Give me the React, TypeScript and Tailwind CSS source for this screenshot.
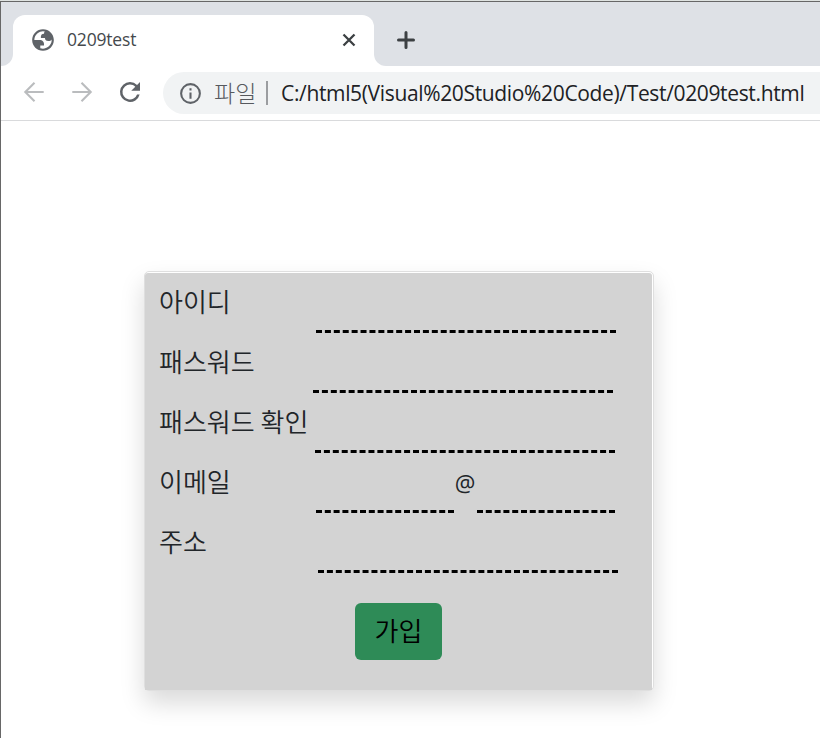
import React from "react";

const latin = "font-['Open_Sans','Noto_Sans_CJK_KR',sans-serif]";
const korean = "font-['Noto_Sans_CJK_KR','Open_Sans',sans-serif]";

function Globe() {
  return (
    <svg className="relative -top-px h-[26px] w-[26px] shrink-0" viewBox="0 0 24 24" fill="#5f6368">
      <path
        fillRule="evenodd"
        d="M12 2C6.48 2 2 6.48 2 12s4.48 10 10 10 10-4.48 10-10S17.52 2 12 2zM4 12h4.4c3.407.022 4.922 1.73 4.543 5.127H9.488v2.47a8.004 8.004 0 0 0 10.498-8.083C19.327 12.504 18.332 13 17 13c-2.137 0-3.206-.916-3.206-2.75h-3.748c-.274-2.728.683-4.092 2.87-4.092 0-.975.327-1.597.811-1.97A8.004 8.004 0 0 0 4 12z"
      />
    </svg>
  );
}

function TabBar() {
  return (
    <div className="flex h-[65px] items-start border-t border-[#676767] bg-[#dee1e6]">
      <div className="flex h-[64px] w-3 items-end bg-white">
        <div className="h-full w-full rounded-br-[12px] bg-[#dee1e6]" />
      </div>
      <div className="mt-[13px] flex h-[51px] w-[361px] items-center rounded-t-[12px] bg-white pl-[17px]">
        <Globe />
        <span className={`${latin} ml-[11px] flex-1 pb-[3px] text-[17.5px] leading-6 tracking-[-0.18px] text-[#45494d]`}>
          0209test
        </span>
        <svg className="mb-[2px] mr-[18px] h-[14px] w-[14px]" viewBox="0 0 14 14" fill="none" stroke="#3c4043" strokeWidth="2.3">
          <path d="M1.5 1.5l11 11M12.5 1.5l-11 11" />
        </svg>
      </div>
      <div className="h-[64px] flex-1 bg-white">
        <div className="h-full w-full rounded-bl-[12px] bg-[#dee1e6] pl-[23px] pt-[29px]">
          <svg className="h-[18px] w-[18px]" viewBox="0 0 18 18" fill="none" stroke="#3c4043" strokeWidth="3" strokeLinecap="round">
            <path d="M9 1.5v15M1.5 9h15" />
          </svg>
        </div>
      </div>
    </div>
  );
}

function AddressBar() {
  return (
    <div className="flex h-[55px] items-center border-b border-[#d9dadc] bg-white pl-[22px]">
      <svg className="mb-[2px] h-[22px] w-[22px] shrink-0" viewBox="0 0 22 22" fill="none" stroke="#babcbe" strokeWidth="2.1">
        <path d="M20.7 11H2.3M11.5 1.8L2.3 11l9.2 9.2" />
      </svg>
      <svg className="mb-[2px] ml-[26px] h-[22px] w-[22px] shrink-0" viewBox="0 0 22 22" fill="none" stroke="#babcbe" strokeWidth="2.1">
        <path d="M1.3 11h18.4M10.5 1.8l9.2 9.2-9.2 9.2" />
      </svg>
      <svg className="mb-[2px] ml-[22px] h-[30px] w-[30px] shrink-0" viewBox="0 0 24 24" fill="#5f6368">
        <path d="M17.65 6.35A7.958 7.958 0 0 0 12 4a8 8 0 1 0 7.73 10h-2.08A6 6 0 1 1 12 6c1.66 0 3.14.69 4.22 1.78L13 11h7V4l-2.35 2.35z" />
      </svg>
      <div className="ml-[18px] flex h-[42px] flex-1 items-center overflow-hidden rounded-l-full bg-[#f1f3f4] pl-[15px]">
        <svg className="h-[25px] w-[25px] shrink-0" viewBox="0 0 24 24" fill="#5f6368">
          <path d="M11 7h2v2h-2zm0 4h2v6h-2zm1-9a10 10 0 1 0 0 20 10 10 0 0 0 0-20zm0 18a8 8 0 1 1 0-16 8 8 0 0 1 0 16z" />
        </svg>
        <span className={`${korean} ml-[11px] w-[42px] shrink-0 whitespace-nowrap pb-[3px] text-[23px] font-light leading-8 text-[#56595e]`}>
          파일
        </span>
        <div className="ml-[10px] h-6 w-[2px] shrink-0 bg-[#9b9da0]" />
        <span className={`${latin} ml-[13px] whitespace-nowrap text-[21px] leading-8 tracking-[-0.35px] text-[#202124]`}>
          C:/html5(Visual%20Studio%20Code)/Test/0209test.html
        </span>
      </div>
    </div>
  );
}

const fieldClass = "h-[60px] shrink-0 border-b-[3px] border-dashed border-black bg-transparent outline-none";

function Row({ label, labelWidth, children }: { label: string; labelWidth: string; children: React.ReactNode }) {
  return (
    <div className="flex h-[60px]">
      <label className={`${korean} ${labelWidth} shrink-0 whitespace-nowrap pt-[10px] text-[26px] font-[350] leading-[36px] text-[#212529]`}>
        {label}
      </label>
      {children}
    </div>
  );
}

function SignUpCard() {
  return (
    <form className="ml-[143px] mt-[150px] h-[420px] w-[510px] rounded-[5px] border border-[#dfdfdf] bg-white pr-px pt-px shadow-[0_12px_24px_rgba(0,0,0,0.15)]">
      <div className="h-full w-full rounded-t-[3px] bg-[#d3d3d3] pl-[14px]">
        <Row label="아이디" labelWidth="w-[157px]">
          <input className={`${fieldClass} w-[300px]`} />
        </Row>
        <Row label="패스워드" labelWidth="w-[154px]">
          <input className={`${fieldClass} w-[300px]`} />
        </Row>
        <Row label="패스워드 확인" labelWidth="w-[156px]">
          <input className={`${fieldClass} w-[300px]`} />
        </Row>
        <Row label="이메일" labelWidth="w-[157px]">
          <input className={`${fieldClass} w-[138px]`} />
          <span className={`${latin} w-[23px] pr-px pt-[12px] text-center text-[23px] leading-[36px] text-[#212529]`}>@</span>
          <input className={`${fieldClass} w-[138px]`} />
        </Row>
        <Row label="주소" labelWidth="w-[159px]">
          <input className={`${fieldClass} w-[300px]`} />
        </Row>
        <button
          type="button"
          className={`${korean} ml-[196px] mt-[30px] flex h-[57px] w-[87px] items-center justify-center rounded-[6px] bg-[#2e8b57] pb-1 text-[26px] font-[350] leading-9 text-black`}
        >
          가입
        </button>
      </div>
    </form>
  );
}

export default function App() {
  return (
    <div className="h-[738px] w-[820px] overflow-hidden bg-[#dfe3e1] pt-px">
      <div className="h-[737px] border-l border-[#676767] bg-white">
        <TabBar />
        <AddressBar />
        <div className="flex">
          <SignUpCard />
        </div>
      </div>
    </div>
  );
}
